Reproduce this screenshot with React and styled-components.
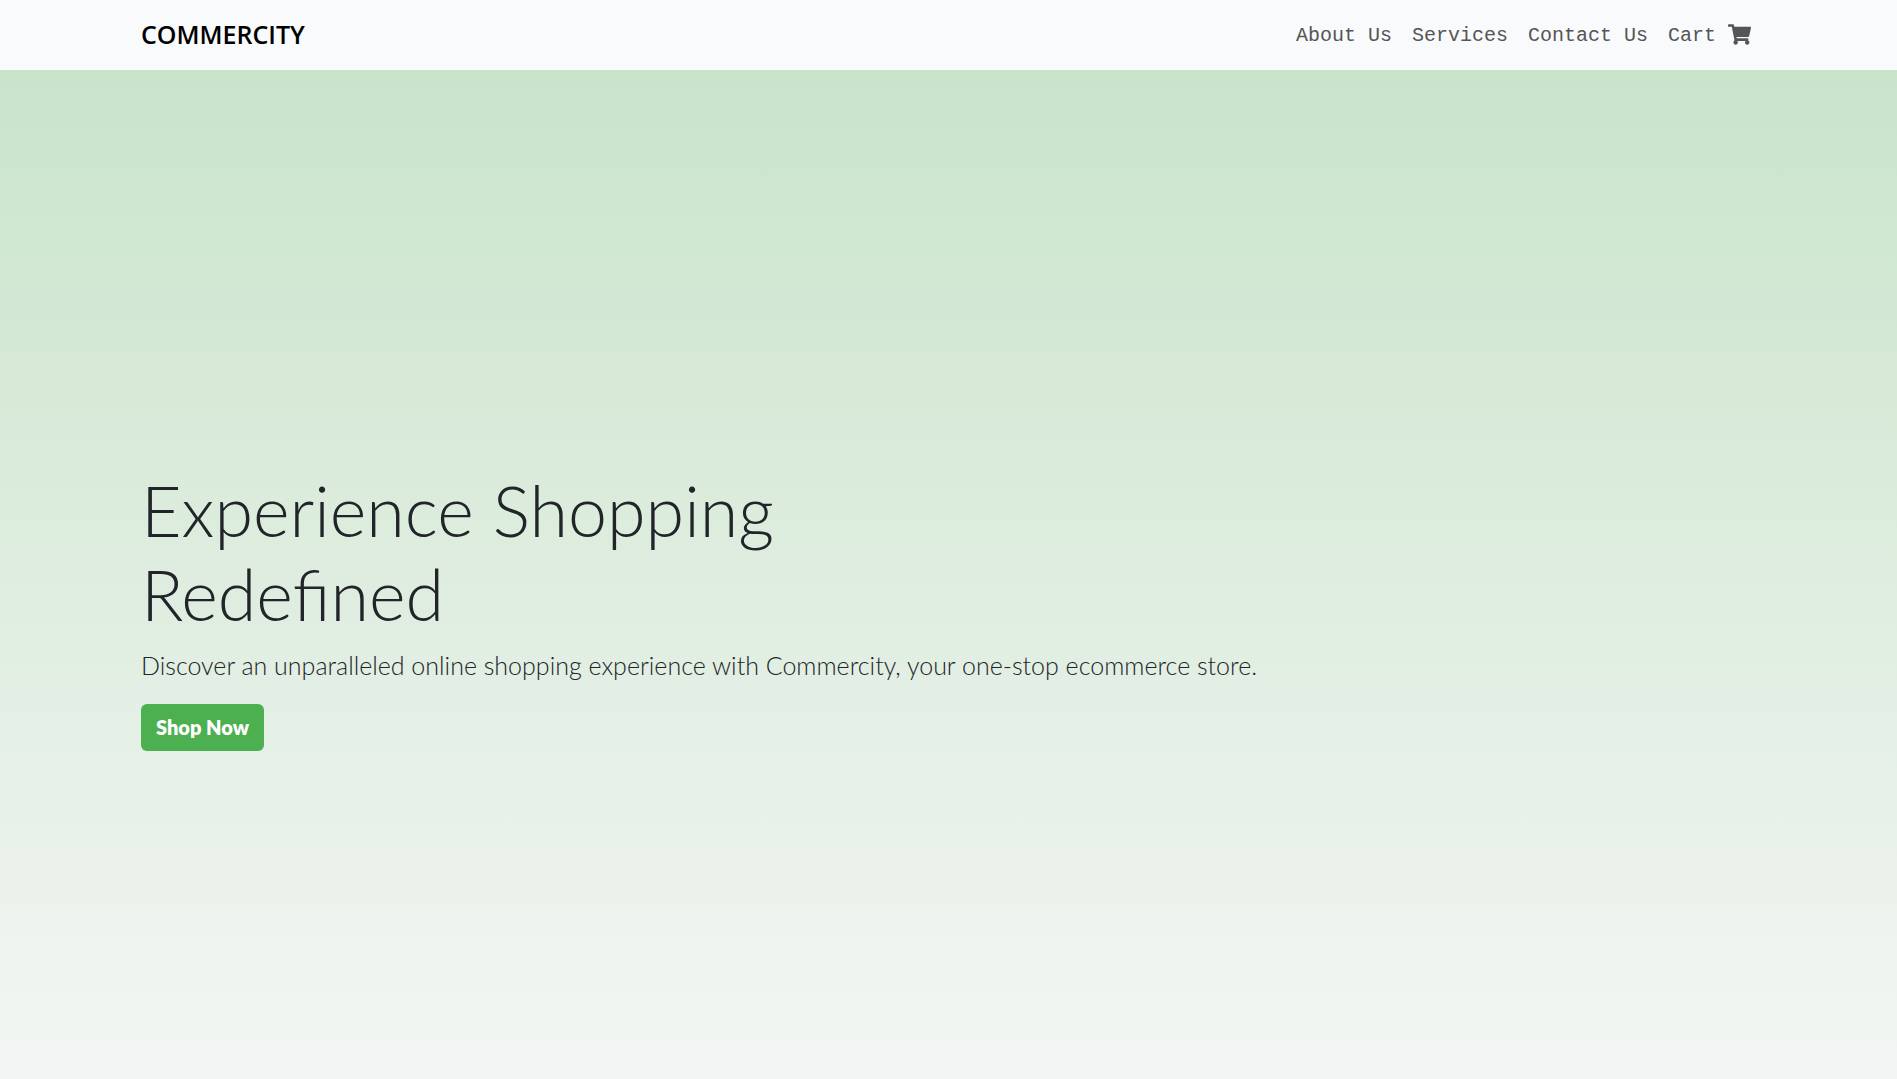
import React from "react";
import styled, { createGlobalStyle } from "styled-components";
import { FaShoppingCart } from "react-icons/fa";

const GlobalStyle = createGlobalStyle`
  *, *::before, *::after { box-sizing: border-box; }
  body {
    margin: 0;
    font-family: Lato, sans-serif;
    color: #212529;
  }
`;

const Page = styled.div`
  height: 100vh;
  overflow: hidden;
`;

const Header = styled.header`
  display: flex;
  flex-wrap: wrap;
  align-items: center;
  justify-content: space-between;
  min-height: 70px;
  padding: 0 141px;
  background: #f8fafc;
`;

const Brand = styled.a`
  padding-bottom: 2px;
  font-family: "Open Sans", "Noto Sans", sans-serif;
  font-size: 25px;
  font-weight: 600;
  line-height: 38px;
  color: #000;
  text-decoration: none;
`;

const Nav = styled.nav`
  display: flex;
  flex-wrap: wrap;
  gap: 20px;
  padding: 2px 5px 0 0;
`;

const NavLink = styled.a`
  display: flex;
  align-items: center;
  gap: 12px;
  font-family: "Liberation Mono", monospace;
  font-size: 20px;
  line-height: 30px;
  color: #555;
  text-decoration: none;

  svg {
    margin-bottom: 4px;
  }
`;

const Hero = styled.main`
  display: flex;
  flex-direction: column;
  align-items: flex-start;
  justify-content: center;
  min-height: 100vh;
  padding: 0 141px;
  background: linear-gradient(180deg, #c9e4ca, #f6f7f7);
`;

const Title = styled.h1`
  max-width: 805px;
  margin: 0 0 10px;
  font-size: 70px;
  font-weight: 300;
  line-height: 84px;
`;

const Lead = styled.p`
  margin: 0 0 20px;
  font-size: 25px;
  font-weight: 300;
  line-height: 38px;
`;

const ShopButton = styled.button`
  padding: 8px 15px;
  border: 0;
  border-radius: 6px;
  background: #4caf50;
  color: #fff;
  font-family: inherit;
  font-size: 20px;
  font-weight: 800;
  line-height: 31px;
  cursor: pointer;
`;

const links = ["About Us", "Services", "Contact Us"];

export default function App() {
  return (
    <Page>
      <GlobalStyle />
      <Header>
        <Brand href="#">COMMERCITY</Brand>
        <Nav>
          {links.map((label) => (
            <NavLink key={label} href="#">{label}</NavLink>
          ))}
          <NavLink href="#">
            Cart <FaShoppingCart size={23} aria-hidden="true" />
          </NavLink>
        </Nav>
      </Header>
      <Hero>
        <Title>
          Experience Shopping
          <br />
          Redefined
        </Title>
        <Lead>
          Discover an unparalleled online shopping experience with Commercity, your one-stop ecommerce store.
        </Lead>
        <ShopButton type="button">Shop Now</ShopButton>
      </Hero>
    </Page>
  );
}
